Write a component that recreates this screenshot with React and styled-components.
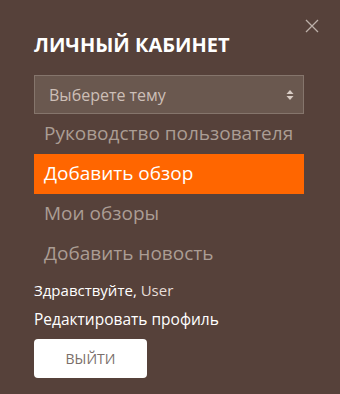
import React, {useState} from 'react'
import styled, {createGlobalStyle} from "styled-components"

const COLORS = {
    background: "#56413a",
    select: "#6a584f",
    selectBorder: "#85756c",
    muted: "#ab9d94",
    orange: "#ff6600",
    white: "#ffffff"
}

const Global = createGlobalStyle`
    html, body {
        margin: 0;
        padding: 0;
        background: ${COLORS.background};
    }
    body {
        font-family: "Open Sans", "Liberation Sans", sans-serif;
    }
`

const items = ["Руководство пользователя", "Добавить обзор", "Мои обзоры", "Добавить новость"]

function App() {
    const [active, setActive] = useState(1);

    return (
        <Panel>
            <Global />
            <Close aria-label="close">
                <svg width="14" height="14" viewBox="0 0 14 14">
                    <path d="M1 1 L13 13 M13 1 L1 13" stroke="#bcb0a9" strokeWidth="1.3" fill="none"/>
                </svg>
            </Close>
            <Title>ЛИЧНЫЙ КАБИНЕТ</Title>
            <Select>
                <span>Выберете тему</span>
                <svg width="8" height="12" viewBox="0 0 8 12">
                    <path d="M4 1 L7.5 5 H0.5 Z M4 11 L7.5 7 H0.5 Z" fill="#d8ccc5"/>
                </svg>
            </Select>
            <Menu>
                {items.map((item, i) => (
                    <MenuItem key={item} $active={i === active} onClick={() => setActive(i)}>
                        {item}
                    </MenuItem>
                ))}
            </Menu>
            <Greeting>Здравствуйте, <User>User</User></Greeting>
            <Edit>Редактировать профиль</Edit>
            <Logout>ВЫЙТИ</Logout>
        </Panel>
    )
}

const Panel = styled.div`
    position: relative;
    width: 340px;
    height: 394px;
    box-sizing: border-box;
    padding: 33px 36px 0 34px;
    background: ${COLORS.background};
    display: flex;
    flex-direction: column;
`

const Close = styled.button`
    position: absolute;
    top: 19px;
    right: 21px;
    border: none;
    background: none;
    padding: 0;
    display: flex;
    cursor: pointer;
`

const Title = styled.h2`
    margin: 0;
    font-size: 20px;
    font-weight: 700;
    line-height: 24px;
    color: ${COLORS.white};
`

const Select = styled.div`
    margin-top: 18px;
    height: 39px;
    box-sizing: border-box;
    background: ${COLORS.select};
    border: 1px solid ${COLORS.selectBorder};
    display: flex;
    align-items: center;
    justify-content: space-between;
    padding: 0 9px 0 14px;
    font-size: 16px;
    color: #cdbfb7;
`

const Menu = styled.div`
    display: flex;
    flex-direction: column;
`

const MenuItem = styled.div`
    height: 40px;
    line-height: 38px;
    padding: 0 10px;
    font-size: 19px;
    color: ${p => p.$active ? COLORS.white : COLORS.muted};
    background: ${p => p.$active ? COLORS.orange : "transparent"};
    cursor: pointer;
`

const Greeting = styled.div`
    margin-top: 6px;
    font-size: 15px;
    line-height: 20px;
    color: ${COLORS.white};
`

const User = styled.span`
    color: #e6ddd8;
`

const Edit = styled.div`
    margin-top: 9px;
    font-size: 15.5px;
    line-height: 20px;
    color: ${COLORS.white};
`

const Logout = styled.button`
    margin-top: 10px;
    width: 113px;
    height: 39px;
    border: none;
    border-radius: 4px;
    background: ${COLORS.white};
    color: #7a6e6a;
    font-family: inherit;
    font-size: 14px;
    cursor: pointer;
`

export default App
